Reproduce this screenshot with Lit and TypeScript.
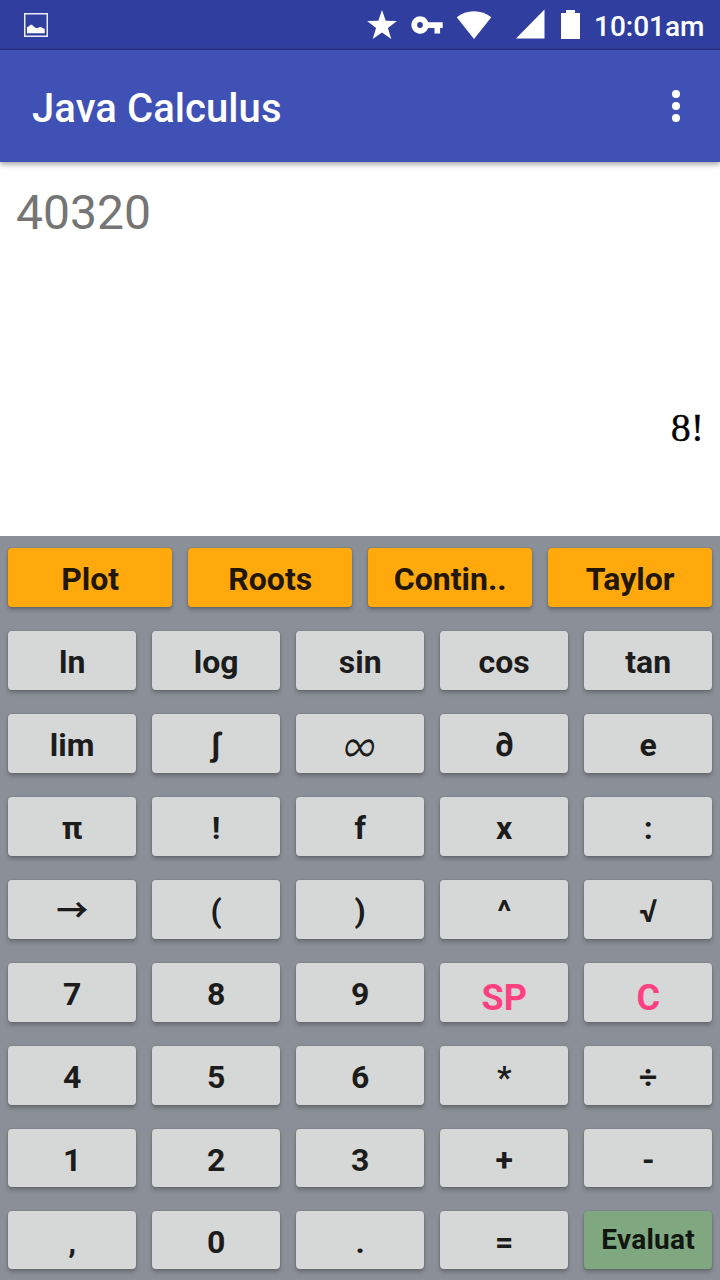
import { LitElement, html, css } from "lit";
import { customElement, property } from "lit/decorators.js";

type KeySpec = { label: string; kind?: string };

const k = (label: string, kind = ""): KeySpec => ({ label, kind });

const FUNCTIONS: KeySpec[] = ["Plot", "Roots", "Contin..", "Taylor"].map((l) => k(l, "orange"));

const ROWS: KeySpec[][] = [
  [k("ln"), k("log"), k("sin"), k("cos"), k("tan")],
  [k("lim"), k("∫"), k("∞", "infinity"), k("∂"), k("e")],
  [k("π"), k("!"), k("f"), k("x"), k(":")],
  [k("→", "arrow"), k("("), k(")"), k("^"), k("√")],
  [k("7"), k("8"), k("9"), k("SP", "pink"), k("C", "pink")],
  [k("4"), k("5"), k("6"), k("*"), k("÷")],
  [k("1"), k("2"), k("3"), k("+"), k("-")],
  [k(","), k("0"), k("."), k("="), k("Evaluat", "green")],
];

@customElement("calc-key")
class CalcKey extends LitElement {
  @property() label = "";
  @property() kind = "";

  static styles = css`
    :host {
      display: block;
      min-width: 0;
    }
    .key {
      display: flex;
      align-items: flex-start;
      justify-content: center;
      box-sizing: border-box;
      width: 100%;
      height: 100%;
      margin: 0;
      padding: 12px 0 0 0.4px;
      border: 0;
      border-radius: 4px;
      background: #d6d8d7;
      color: #1c1c1c;
      font: 700 32px/38px Roboto, sans-serif;
      white-space: nowrap;
      box-shadow: 0 3px 4px rgba(0, 0, 0, 0.24), 0 0 2px rgba(0, 0, 0, 0.2);
    }
    .orange {
      background: #ffa90d;
      color: #221700;
    }
    .pink {
      color: #ff4081;
      font-size: 36px;
      padding-top: 16px;
    }
    .green {
      background: #80a880;
      color: #111611;
      font-size: 28px;
      letter-spacing: 0.25px;
      padding-top: 10px;
    }
    .infinity {
      font-family: "Noto Sans CJK JP", sans-serif;
      font-weight: 400;
    }
    .infinity .label {
      transform: skewX(-8deg) scale(0.95, 1.34);
    }
    .arrow {
      font-family: "Noto Sans CJK JP", sans-serif;
      font-weight: 700;
      padding-top: 9px;
    }
  `;

  render() {
    return html`<button class="key ${this.kind}"><span class="label">${this.label}</span></button>`;
  }
}

@customElement("app-root")
class AppRoot extends LitElement {
  static styles = css`
    :host {
      display: flex;
      flex-direction: column;
      width: 720px;
      height: 1280px;
      overflow: hidden;
      background: #fff;
      font-family: Roboto, sans-serif;
    }
    svg {
      display: block;
      fill: #fff;
    }
    .status {
      box-sizing: border-box;
      display: flex;
      justify-content: space-between;
      height: 50px;
      padding: 0 15.500px 0 24px;
      background: #303f9f;
      box-shadow: inset 0 -1px 1px rgba(0, 0, 0, 0.15);
      color: #fff;
    }
    .tray {
      display: flex;
    }
    .clock {
      margin-left: 13.500px;
      font: 500 28px/33px Roboto, sans-serif;
      padding-top: 10px;
    }
    .bar {
      box-sizing: border-box;
      display: flex;
      align-items: center;
      justify-content: space-between;
      height: 112px;
      padding: 0 40px 0 32px;
      background: #3f51b5;
      color: #fff;
      box-shadow: 0 2px 6px rgba(0, 0, 0, 0.4);
    }
    .title {
      margin: 0;
      padding-top: 4px;
      font: 500 40px/47px Roboto, sans-serif;
      letter-spacing: 0.08px;
    }
    .display {
      box-sizing: border-box;
      flex: 1;
      display: flex;
      flex-direction: column;
      justify-content: space-between;
      padding: 23px 16px 84px;
    }
    .result {
      color: #757575;
      font-size: 48px;
      line-height: 56px;
    }
    .input {
      color: #000;
      font: 40px/48px "Liberation Serif", serif;
      -webkit-text-stroke: 0.3px #000;
      text-align: right;
    }
    .pad {
      background: #8b8f97;
      height: 744px;
      display: grid;
      grid-template-rows: repeat(7, 59px) 58px 58px;
      row-gap: 24px;
      box-sizing: border-box;
      padding: 12px 8px 0;
    }
    .row {
      display: grid;
      grid-auto-flow: column;
      grid-auto-columns: minmax(0, 1fr);
      column-gap: 16px;
    }
  `;

  renderRow(keys: KeySpec[]) {
    return html`<div class="row">
      ${keys.map((key) => html`<calc-key .label=${key.label} .kind=${key.kind ?? ""}></calc-key>`)}
    </div>`;
  }

  render() {
    return html`
      <div class="status">
        <svg width="24" height="50" viewBox="24 0 24 50">
          <path d="M24 13h24v24H24zM25.500 14.500v21h21v-21z" fill-rule="evenodd" opacity=".9" />
          <path d="M27 33.300v-6l2-1 1.500-1.500h1.500l2 2 2 1.200h2l1.500-1h1.500l1.500 1 2.200 1v4.300z" />
        </svg>
        <div class="tray">
          <svg width="220" height="50" viewBox="360 0 220 50">
            <path d="M382 10l3.700 10.800 11.200.2-9 6.900 3.400 11-9.300-6.500-9.300 6.500 3.400-11-9-6.900 11.200-.2z" />
            <path
              fill-rule="evenodd"
              d="M420 16.300a8.700 8.700 0 1 0 8.200 11.700h6.300v5.600h5.600V28h2.600v-5.700h-14.500A8.700 8.700 0 0 0 420 16.300zm0 5.800a2.900 2.900 0 1 1 0 5.800 2.900 2.900 0 0 1 0-5.800z"
            />
            <path d="M456.700 17.300C466 9.200 482 9.200 491.300 17.300L474 39z" />
            <path d="M544.500 9.500v29H516z" />
            <path d="M566 10h9v3h5v26h-19V13h5z" />
          </svg>
          <div class="clock">10:01am</div>
        </div>
      </div>
      <div class="bar">
        <h1 class="title">Java Calculus</h1>
        <svg width="8" height="32" viewBox="0 0 8 32">
          <circle cx="4" cy="4" r="4" />
          <circle cx="4" cy="16" r="4" />
          <circle cx="4" cy="28" r="4" />
        </svg>
      </div>
      <div class="display">
        <div class="result">40320</div>
        <div class="input">8!</div>
      </div>
      <div class="pad">${this.renderRow(FUNCTIONS)} ${ROWS.map((r) => this.renderRow(r))}</div>
    `;
  }
}
